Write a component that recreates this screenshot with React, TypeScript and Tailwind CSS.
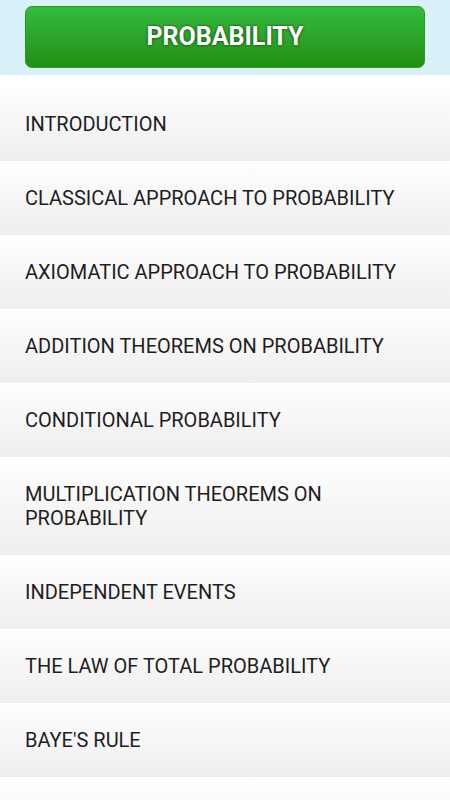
const topics = [
  "INTRODUCTION",
  "CLASSICAL APPROACH TO PROBABILITY",
  "AXIOMATIC APPROACH TO PROBABILITY",
  "ADDITION THEOREMS ON PROBABILITY",
  "CONDITIONAL PROBABILITY",
  "MULTIPLICATION THEOREMS ON PROBABILITY",
  "INDEPENDENT EVENTS",
  "THE LAW OF TOTAL PROBABILITY",
  "BAYE'S RULE",
  "",
];

export default function App() {
  return (
    <div className="w-[450px] h-[800px] overflow-hidden bg-white font-['Roboto',sans-serif]">
      {/* header */}
      <div className="bg-[#d9f1f9] h-[75px] px-[25px] pt-[6px]">
        <div className="h-[62px] rounded-[7px] border border-[#2a9a1c] bg-gradient-to-b from-[#34bb3f] to-[#22900e] flex items-center justify-center">
          <span className="text-white font-bold text-[25px] [text-shadow:0_0_3px_rgba(0,0,0,0.7)]">PROBABILITY</span>
        </div>
      </div>

      {/* topic list */}
      <div className="pt-[12px]">
        {topics.map((t, i) => (
          <div
            key={i}
            className="py-[25px] px-[25px] bg-gradient-to-b from-white to-[#efedee] text-[20px] leading-[24px] text-[#1e1e1e] min-h-[74px]"
          >
            {t}
          </div>
        ))}
      </div>
    </div>
  );
}
